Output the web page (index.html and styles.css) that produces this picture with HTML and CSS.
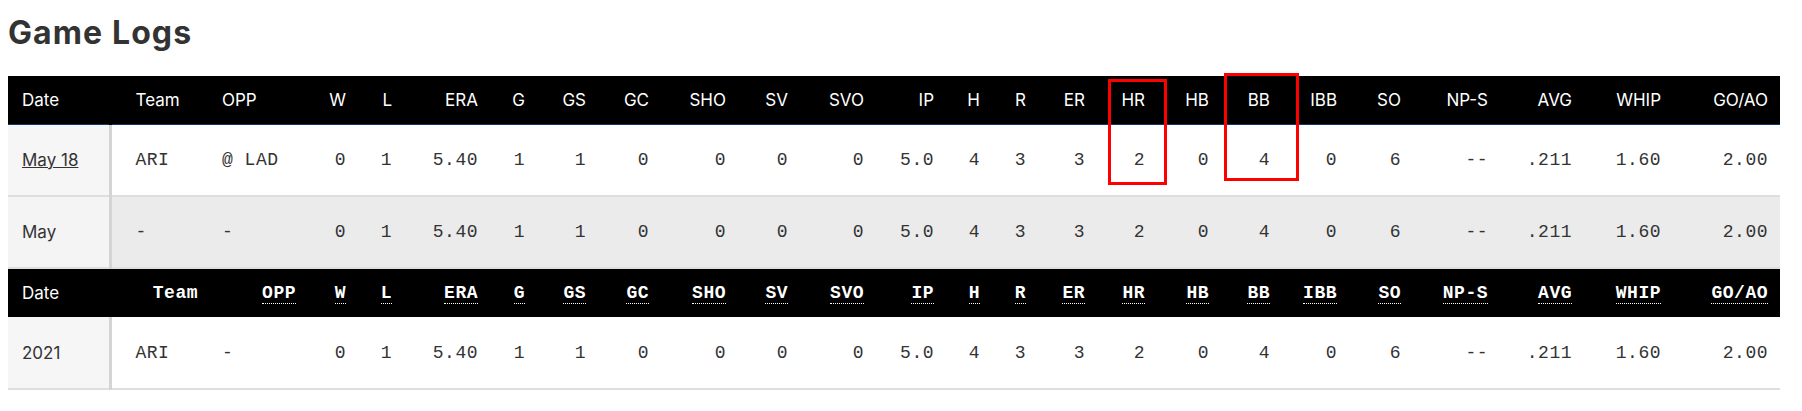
FILE: index.html
```html
<!DOCTYPE html>
<html lang="en">
<head>
<meta charset="utf-8">
<title>Game Logs</title>
<link rel="stylesheet" href="styles.css">
</head>
<body>
<div class="page">
  <h1 class="title">Game Logs</h1>

  <table class="stats">
    <colgroup>
      <col class="c-date"><col class="c-team"><col class="c-opp"><col class="c-w"><col class="c-l"><col class="c-era"><col class="c-g"><col class="c-gs"><col class="c-gc"><col class="c-sho"><col class="c-sv"><col class="c-svo"><col class="c-ip"><col class="c-h"><col class="c-r"><col class="c-er"><col class="c-hr"><col class="c-hb"><col class="c-bb"><col class="c-ibb"><col class="c-so"><col class="c-nps"><col class="c-avg"><col class="c-whip"><col class="c-goao">
    </colgroup>
    <thead>
      <tr class="head head-top">
        <th class="date">Date</th><th class="left team">Team</th><th class="left">OPP</th><th>W</th><th>L</th><th>ERA</th><th>G</th><th>GS</th><th>GC</th><th>SHO</th><th>SV</th><th>SVO</th><th>IP</th><th>H</th><th>R</th><th>ER</th><th>HR</th><th>HB</th><th>BB</th><th>IBB</th><th>SO</th><th>NP-S</th><th>AVG</th><th>WHIP</th><th>GO/AO</th>
      </tr>
    </thead>
    <tbody>
      <tr class="row">
        <td class="date"><a class="date-link" href="#">May 18</a></td><td class="left team">ARI</td><td class="left">@ LAD</td><td>0</td><td>1</td><td>5.40</td><td>1</td><td>1</td><td>0</td><td>0</td><td>0</td><td>0</td><td>5.0</td><td>4</td><td>3</td><td>3</td><td>2</td><td>0</td><td>4</td><td>0</td><td>6</td><td>--</td><td>.211</td><td>1.60</td><td>2.00</td>
      </tr>
      <tr class="row row-total">
        <td class="date">May</td><td class="left team">-</td><td class="left">-</td><td>0</td><td>1</td><td>5.40</td><td>1</td><td>1</td><td>0</td><td>0</td><td>0</td><td>0</td><td>5.0</td><td>4</td><td>3</td><td>3</td><td>2</td><td>0</td><td>4</td><td>0</td><td>6</td><td>--</td><td>.211</td><td>1.60</td><td>2.00</td>
      </tr>
    </tbody>
  </table>

  <table class="stats">
    <colgroup>
      <col class="c-date"><col class="c-team"><col class="c-opp"><col class="c-w"><col class="c-l"><col class="c-era"><col class="c-g"><col class="c-gs"><col class="c-gc"><col class="c-sho"><col class="c-sv"><col class="c-svo"><col class="c-ip"><col class="c-h"><col class="c-r"><col class="c-er"><col class="c-hr"><col class="c-hb"><col class="c-bb"><col class="c-ibb"><col class="c-so"><col class="c-nps"><col class="c-avg"><col class="c-whip"><col class="c-goao">
    </colgroup>
    <thead>
      <tr class="head head-mono">
        <th class="date">Date</th><th>Team</th><th><abbr class="ab" title="Opponent">OPP</abbr></th><th><abbr class="ab" title="Wins">W</abbr></th><th><abbr class="ab" title="Losses">L</abbr></th><th><abbr class="ab" title="Earned Run Average">ERA</abbr></th><th><abbr class="ab" title="Games">G</abbr></th><th><abbr class="ab" title="Games Started">GS</abbr></th><th><abbr class="ab" title="Complete Games">GC</abbr></th><th><abbr class="ab" title="Shutouts">SHO</abbr></th><th><abbr class="ab" title="Saves">SV</abbr></th><th><abbr class="ab" title="Save Opportunities">SVO</abbr></th><th><abbr class="ab" title="Innings Pitched">IP</abbr></th><th><abbr class="ab" title="Hits">H</abbr></th><th><abbr class="ab" title="Runs">R</abbr></th><th><abbr class="ab" title="Earned Runs">ER</abbr></th><th><abbr class="ab" title="Home Runs">HR</abbr></th><th><abbr class="ab" title="Hit Batsmen">HB</abbr></th><th><abbr class="ab" title="Walks">BB</abbr></th><th><abbr class="ab" title="Intentional Walks">IBB</abbr></th><th><abbr class="ab" title="Strikeouts">SO</abbr></th><th><abbr class="ab" title="Pitches-Strikes">NP-S</abbr></th><th><abbr class="ab" title="Batting Average Against">AVG</abbr></th><th><abbr class="ab" title="Walks and Hits per Inning Pitched">WHIP</abbr></th><th><abbr class="ab" title="Ground Outs / Air Outs">GO/AO</abbr></th>
      </tr>
    </thead>
    <tbody>
      <tr class="row">
        <td class="date">2021</td><td class="left team">ARI</td><td class="left">-</td><td>0</td><td>1</td><td>5.40</td><td>1</td><td>1</td><td>0</td><td>0</td><td>0</td><td>0</td><td>5.0</td><td>4</td><td>3</td><td>3</td><td>2</td><td>0</td><td>4</td><td>0</td><td>6</td><td>--</td><td>.211</td><td>1.60</td><td>2.00</td>
      </tr>
    </tbody>
  </table>

  <div class="mark mark-hr"></div>
  <div class="mark mark-bb"></div>
</div>
</body>
</html>
```

FILE: styles.css
```css
html, body {
  margin: 0;
  padding: 0;
  background: #ffffff;
}

body {
  padding: 8px;
}

.page {
  position: relative;
  display: flex;
  flex-direction: column;
  font-family: Inter, "Noto Sans", sans-serif;
  color: #333333;
}

.title {
  margin: 5px 0 24px 0;
  font-family: Inter, "Noto Sans", sans-serif;
  font-weight: 700;
  font-size: 32px;
  line-height: 39px;
  color: #333333;
  letter-spacing: 1.1px;
}

.stats {
  border-collapse: collapse;
  table-layout: fixed;
  width: 1772px;
}

.c-date { width: 102px; }
.c-team { width: 100px; }
.c-opp { width: 98px; }
.c-w { width: 50px; }
.c-l { width: 46px; }
.c-era { width: 86px; }
.c-g { width: 47px; }
.c-gs { width: 61px; }
.c-gc { width: 63px; }
.c-sho { width: 77px; }
.c-sv { width: 62px; }
.c-svo { width: 76px; }
.c-ip { width: 70px; }
.c-h { width: 46px; }
.c-r { width: 46px; }
.c-er { width: 59px; }
.c-hr { width: 60px; }
.c-hb { width: 64px; }
.c-bb { width: 61px; }
.c-ibb { width: 67px; }
.c-so { width: 64px; }
.c-nps { width: 87px; }
.c-avg { width: 84px; }
.c-whip { width: 89px; }
.c-goao { width: 107px; }

.stats th,
.stats td {
  padding: 0 12px 0 0;
  text-align: right;
  white-space: nowrap;
  overflow: visible;
}

.head {
  background: #000000;
  height: 48px;
}

.head th {
  color: #ffffff;
  font-weight: 400;
  font-family: Inter, "Noto Sans", sans-serif;
  font-size: 17px;
  letter-spacing: 0;
}

.head-top th {
  border-bottom: 1px solid #0d3a6e;
}

.head-mono th {
  font-family: "Liberation Mono", "DejaVu Sans Mono", monospace;
  font-weight: 700;
  font-size: 18px;
  letter-spacing: 0.5px;
}

.head-mono th.date {
  font-family: Inter, "Noto Sans", sans-serif;
  font-weight: 400;
  font-size: 17px;
  letter-spacing: 0;
}

.ab {
  text-decoration: none;
  border-bottom: 1px dotted #ffffff;
}

.row {
  height: 72px;
}

.row td {
  border-bottom: 2px solid #dedede;
  font-family: "Liberation Mono", "DejaVu Sans Mono", monospace;
  font-size: 18px;
  letter-spacing: 0.5px;
  color: #333333;
}

.row-total td {
  background: #ebebeb;
}

.stats th.date,
.stats td.date {
  text-align: left;
  padding-left: 14px;
  border-right: 3px solid #d4d4d4;
}

.stats th.date {
  border-right-color: #000000;
}

.row td.date {
  background: #f6f6f6;
  font-family: Inter, "Noto Sans", sans-serif;
  font-size: 17px;
  letter-spacing: 0;
}

.row-total td.date {
  background: #f4f4f4;
}

.date-link {
  color: #333333;
  text-decoration: underline;
}

.stats .left {
  text-align: left;
  padding-left: 12px;
}

.stats .team {
  padding-left: 24px;
}

.mark {
  position: absolute;
  border: 3px solid #ff0000;
  box-sizing: border-box;
}

.mark-hr {
  left: 1100px;
  top: 71px;
  width: 59px;
  height: 106px;
}

.mark-bb {
  left: 1216px;
  top: 65px;
  width: 75px;
  height: 108px;
}
```
